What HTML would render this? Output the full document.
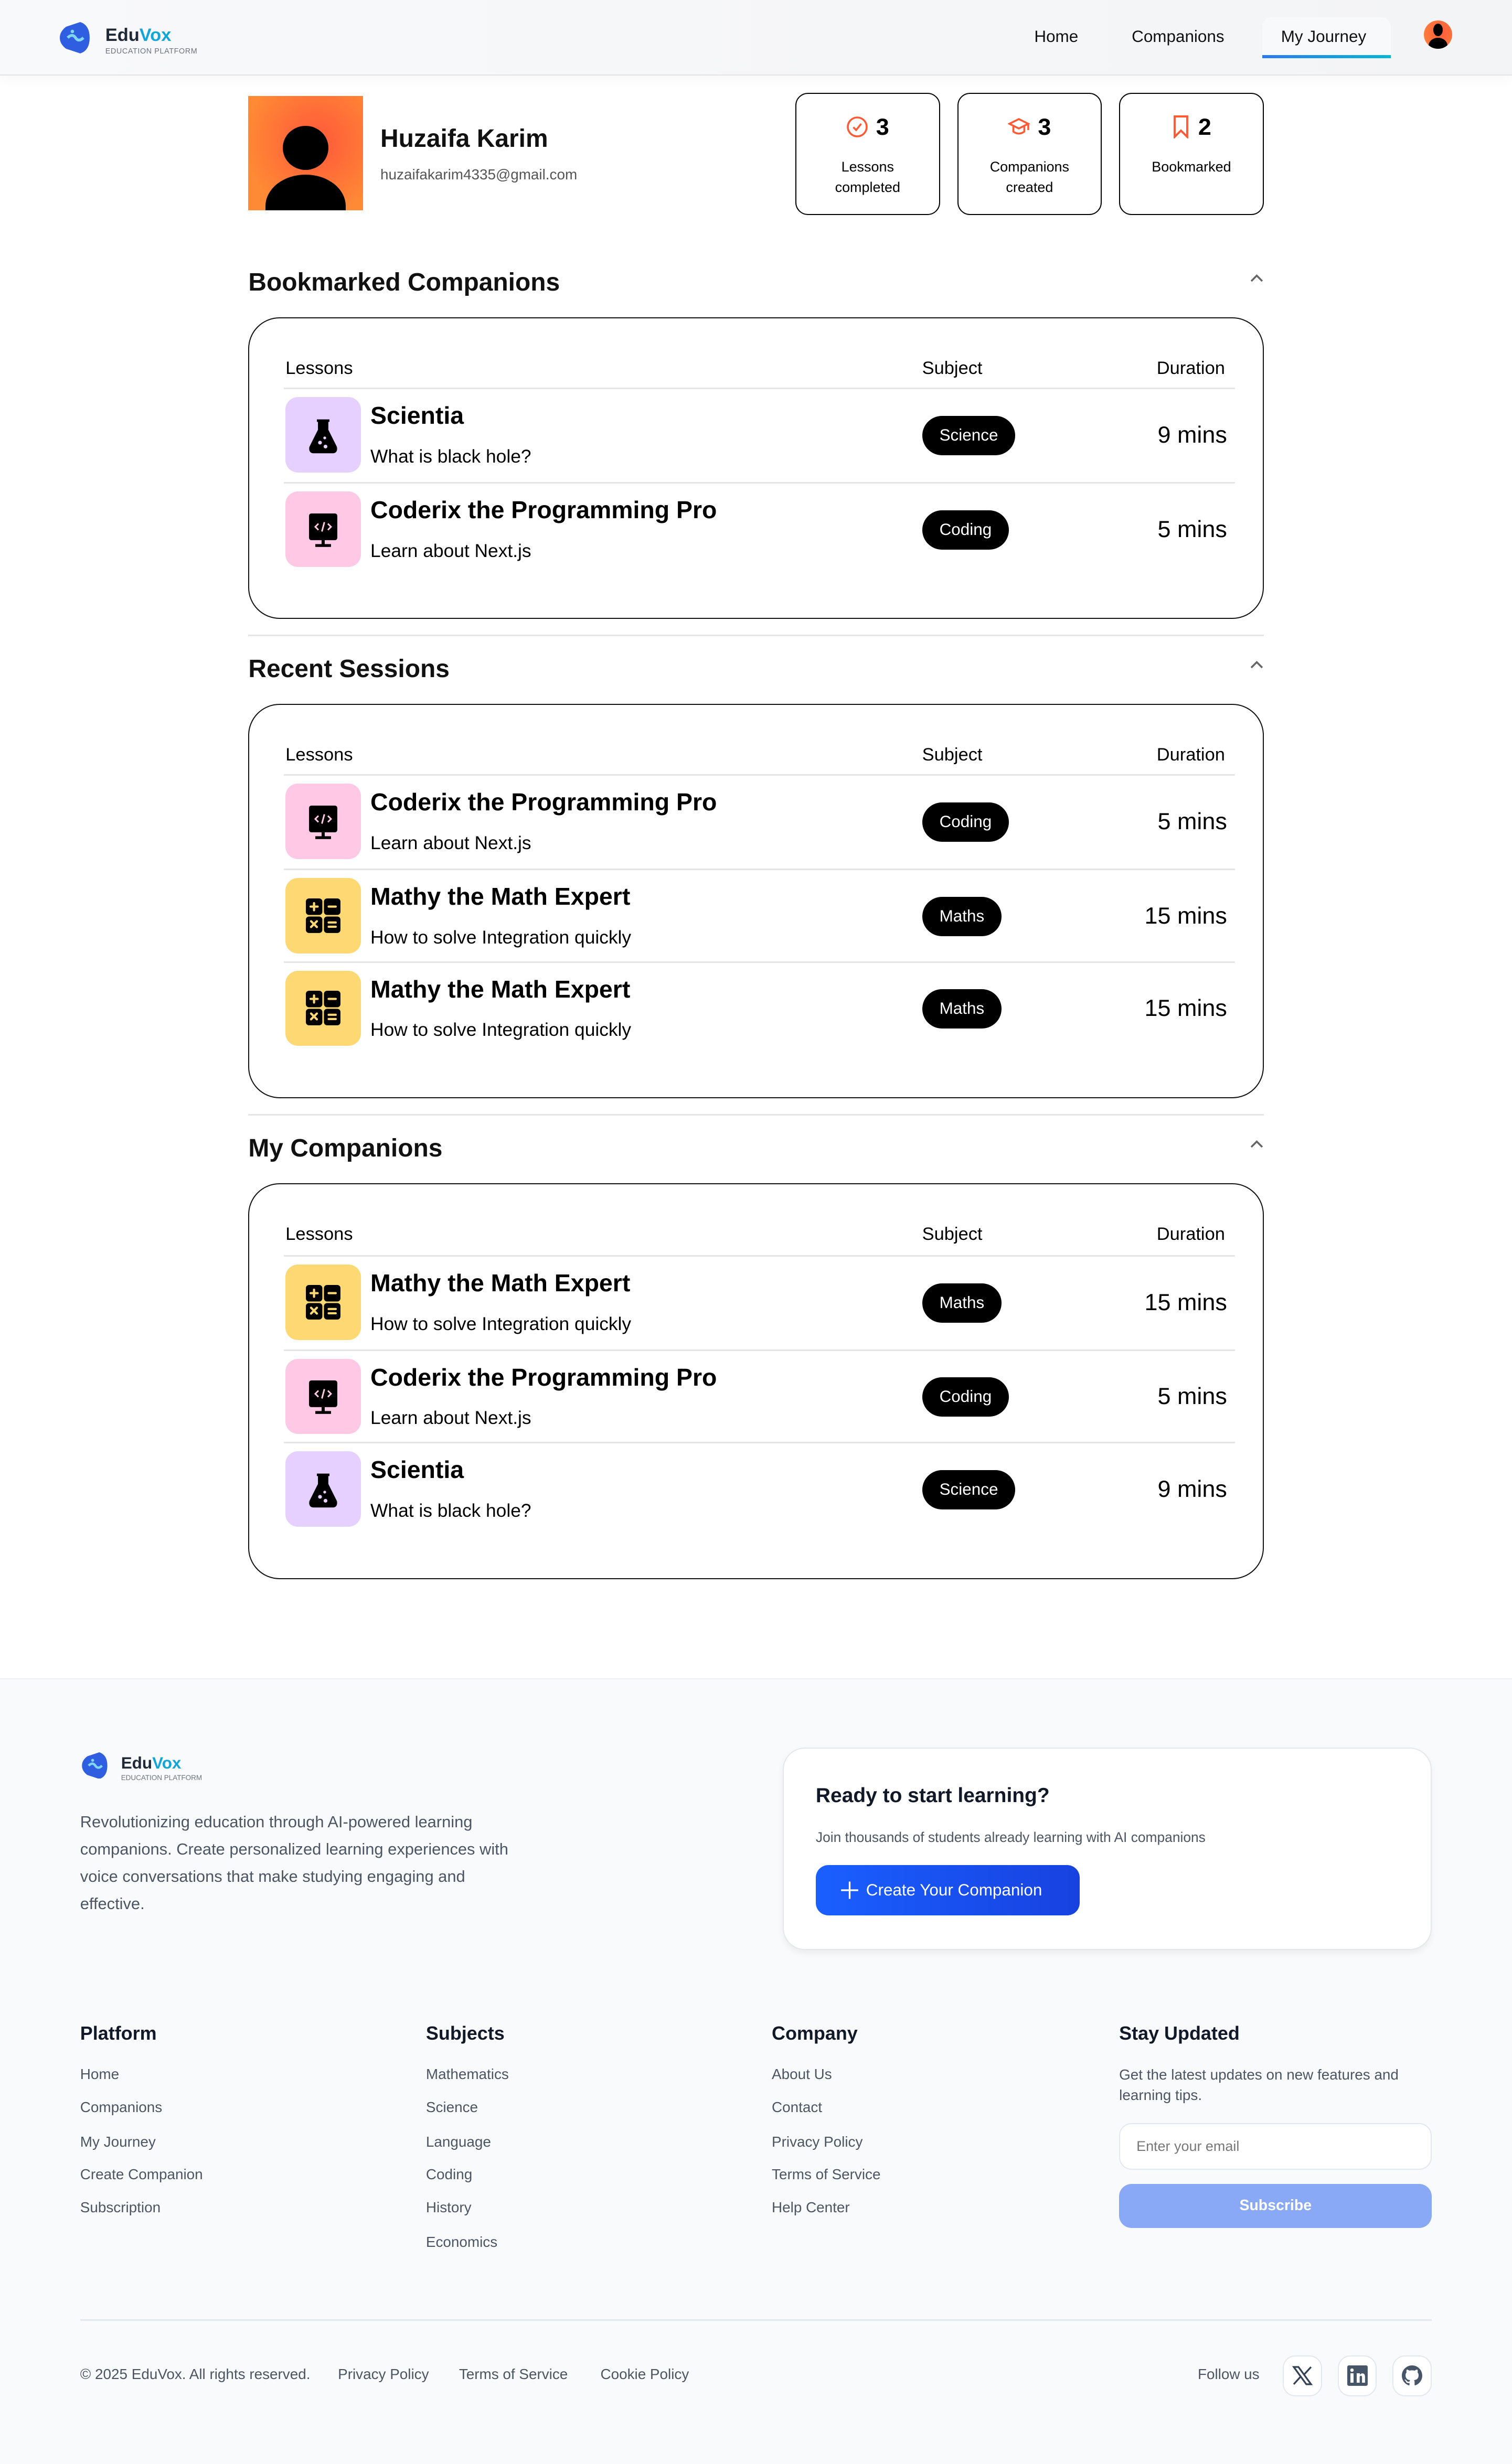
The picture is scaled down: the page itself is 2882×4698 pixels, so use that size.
<!DOCTYPE html>
<html><head><meta charset="utf-8">
<style>
*{margin:0;padding:0;box-sizing:border-box}
html,body{width:2882px;height:4698px;overflow:hidden;background:#fff}
#w{zoom:2.996;width:962px;height:1568px;position:relative;font-family:"Liberation Sans",sans-serif;color:#000;background:#fff}
.a{position:absolute;white-space:nowrap}
.nav{position:absolute;left:0;top:0;width:962px;height:48px;background:linear-gradient(90deg,#f8f9fa,#f3f4f6);border-bottom:1px solid #e3e3e3;box-shadow:0 2px 8px rgba(0,0,0,.04)}
.stat{position:absolute;top:59px;width:92px;height:78px;border:1px solid #000;border-radius:8px;text-align:center}
.stat .n{position:absolute;top:12px;left:0;right:0;font-size:15px;font-weight:bold;line-height:18px;display:flex;justify-content:center;align-items:center;gap:5px}
.stat .l{position:absolute;top:40px;left:0;right:0;font-size:9px;line-height:13px}
.h2{position:absolute;left:158px;font-size:16px;font-weight:bold;line-height:20px;color:#111}
.chev{position:absolute;left:795px;width:9px;height:6px}
.card{position:absolute;left:158px;width:646px;border:1px solid #111;border-radius:20px;background:#fff}
.hd{position:absolute;top:25px;font-size:11.5px;line-height:14px}
.ln{position:absolute;left:22px;width:605px;height:1px;background:#e5e5e5}
.row{position:absolute;left:0;width:646px;height:54px}
.ic{position:absolute;left:23px;top:0;width:48px;height:48px;border-radius:8px;display:flex;align-items:center;justify-content:center}
.tt{position:absolute;left:77px;top:2px;font-size:15.5px;font-weight:bold;line-height:20px}
.st{position:absolute;left:77px;top:31px;font-size:11.8px;line-height:14px}
.pill{position:absolute;left:428px;top:12px;height:25px;border-radius:13px;background:#000;color:#fff;font-size:10.5px;line-height:25px;padding:0 11px}
.du{position:absolute;right:24px;top:15px;font-size:15px;line-height:18px}
.sep{position:absolute;left:158px;width:646px;height:1px;background:#e5e5e5}
.foot{position:absolute;left:0;top:1068px;width:962px;height:500px;background:#f9fafb;border-top:1px solid #eceef1}
.fh{position:absolute;font-size:12px;font-weight:bold;line-height:14px;color:#111827}
.fl{position:absolute;font-size:9.3px;line-height:12px;color:#4b5563}
.soc{position:absolute;top:1499px;width:25px;height:26px;border:1px solid #e2e8f0;border-radius:8px;background:#fff;display:flex;align-items:center;justify-content:center}
</style></head><body><div id="w">

<div class="nav">
  <svg class="a" style="left:38px;top:14px" width="21" height="20" viewBox="0 0 21 20"><path d="M4 3 L13 0 Q19 2 19 10 Q19 18 13 20 L4 17 Q0 14 0 10 Q0 6 4 3Z" fill="#2f5fe0"/><path d="M5 10 Q8 7 10 10 Q12 13 15 10" stroke="#7fd6f5" stroke-width="1.8" fill="none"/><circle cx="8" cy="6" r="1.1" fill="#7fd6f5"/></svg>
  <div class="a" style="left:67px;top:16px;font-size:11.5px;font-weight:bold;line-height:13px;color:#1f2937">Edu<span style="color:#14a5d8">Vox</span></div>
  <div class="a" style="left:67px;top:30px;font-size:4.8px;line-height:6px;color:#6b7280;letter-spacing:.2px">EDUCATION PLATFORM</div>
  <div class="a" style="left:658px;top:17px;font-size:10.5px;line-height:13px;color:#111">Home</div>
  <div class="a" style="left:720px;top:17px;font-size:10.5px;line-height:13px;color:#111">Companions</div>
  <div class="a" style="left:803px;top:11px;width:82px;height:26px;background:#f8f9fb;border-radius:6px 6px 0 0"></div>
  <div class="a" style="left:803px;top:35px;width:82px;height:2px;background:linear-gradient(90deg,#2b7bf0,#06b6d4)"></div>
  <div class="a" style="left:815px;top:17px;font-size:10.5px;line-height:13px;color:#111">My Journey</div>
  <div class="a" style="left:906px;top:13px;width:18px;height:18px;border-radius:50%;background:radial-gradient(circle at 60% 40%,#ff5a3c,#ff8a3c);overflow:hidden">
    <div class="a" style="left:6px;top:2px;width:6px;height:8px;border-radius:50%;background:#000"></div>
    <div class="a" style="left:3px;top:11px;width:12px;height:10px;border-radius:50%;background:#000"></div>
  </div>
</div>

<div class="a" style="left:158px;top:61px;width:73px;height:73px;background:radial-gradient(circle at 60% 40%,#ff5a3a 0%,#ff6b38 30%,#ff8a35 75%);overflow:hidden">
  <div class="a" style="left:22px;top:19px;width:29px;height:28px;border-radius:50%;background:#000"></div>
  <div class="a" style="left:11px;top:50px;width:51px;height:40px;border-radius:50% 50% 0 0;background:#000"></div>
</div>
<div class="a" style="left:242px;top:79px;font-size:16px;font-weight:bold;line-height:19px;color:#111">Huzaifa Karim</div>
<div class="a" style="left:242px;top:105px;font-size:9.3px;line-height:12px;color:#555">huzaifakarim4335@gmail.com</div>

<div class="stat" style="left:506px"><div class="n"><svg width="14" height="14" viewBox="0 0 14 14"><circle cx="7" cy="7" r="6" fill="none" stroke="#ff5a36" stroke-width="1.2"/><path d="M4.5 7.2 L6.3 9 L9.5 5" fill="none" stroke="#ff5a36" stroke-width="1.2"/></svg>3</div><div class="l">Lessons<br>completed</div></div>
<div class="stat" style="left:609px"><div class="n"><svg width="14" height="14" viewBox="0 0 14 14"><path d="M1 5 L7 2 L13 5 L7 8Z" fill="none" stroke="#ff5a36" stroke-width="1.2"/><path d="M3.5 6.5 V10 Q7 12.5 10.5 10 V6.5" fill="none" stroke="#ff5a36" stroke-width="1.2"/><path d="M13 5 V9" stroke="#ff5a36" stroke-width="1.2"/></svg>3</div><div class="l">Companions<br>created</div></div>
<div class="stat" style="left:712px"><div class="n"><svg width="12" height="15" viewBox="0 0 12 15"><path d="M2 1 H10 V14 L6 10 L2 14Z" fill="none" stroke="#ff5a36" stroke-width="1.3"/></svg>2</div><div class="l">Bookmarked</div></div>

<div class="h2" style="top:170px">Bookmarked Companions</div>
<svg class="chev" style="top:174px" viewBox="0 0 9 6"><path d="M1 5 L4.5 1.5 L8 5" stroke="#666" stroke-width="1.2" fill="none"/></svg>

<div class="card" style="top:202px;height:192px">
  <div class="hd" style="left:23px">Lessons</div><div class="hd" style="left:428px">Subject</div><div class="hd" style="right:24px">Duration</div>
  <div class="ln" style="top:44px"></div>
  <div class="row" style="top:50px"><div class="ic" style="background:#e5d0ff"><svg width="24" height="26"><use href="#flask"/></svg></div><div class="tt">Scientia</div><div class="st">What is black hole?</div><div class="pill">Science</div><div class="du">9 mins</div></div>
  <div class="ln" style="top:104px"></div>
  <div class="row" style="top:110px"><div class="ic" style="background:#ffc8e4"><svg width="24" height="26"><use href="#code"/></svg></div><div class="tt">Coderix the Programming Pro</div><div class="st">Learn about Next.js</div><div class="pill">Coding</div><div class="du">5 mins</div></div>
</div>

<div class="sep" style="top:404px"></div>
<div class="h2" style="top:416px">Recent Sessions</div>
<svg class="chev" style="top:420px" viewBox="0 0 9 6"><path d="M1 5 L4.5 1.5 L8 5" stroke="#666" stroke-width="1.2" fill="none"/></svg>

<div class="card" style="top:448px;height:251px">
  <div class="hd" style="left:23px">Lessons</div><div class="hd" style="left:428px">Subject</div><div class="hd" style="right:24px">Duration</div>
  <div class="ln" style="top:44px"></div>
  <div class="row" style="top:50px"><div class="ic" style="background:#ffc8e4"><svg width="24" height="26"><use href="#code"/></svg></div><div class="tt">Coderix the Programming Pro</div><div class="st">Learn about Next.js</div><div class="pill">Coding</div><div class="du">5 mins</div></div>
  <div class="ln" style="top:104px"></div>
  <div class="row" style="top:110px"><div class="ic" style="background:#fed872"><svg width="24" height="24"><use href="#calc"/></svg></div><div class="tt">Mathy the Math Expert</div><div class="st">How to solve Integration quickly</div><div class="pill">Maths</div><div class="du">15 mins</div></div>
  <div class="ln" style="top:163px"></div>
  <div class="row" style="top:169px"><div class="ic" style="background:#fed872"><svg width="24" height="24"><use href="#calc"/></svg></div><div class="tt">Mathy the Math Expert</div><div class="st">How to solve Integration quickly</div><div class="pill">Maths</div><div class="du">15 mins</div></div>
</div>

<div class="sep" style="top:709px"></div>
<div class="h2" style="top:721px">My Companions</div>
<svg class="chev" style="top:725px" viewBox="0 0 9 6"><path d="M1 5 L4.5 1.5 L8 5" stroke="#666" stroke-width="1.2" fill="none"/></svg>

<div class="card" style="top:753px;height:252px">
  <div class="hd" style="left:23px">Lessons</div><div class="hd" style="left:428px">Subject</div><div class="hd" style="right:24px">Duration</div>
  <div class="ln" style="top:45px"></div>
  <div class="row" style="top:51px"><div class="ic" style="background:#fed872"><svg width="24" height="24"><use href="#calc"/></svg></div><div class="tt">Mathy the Math Expert</div><div class="st">How to solve Integration quickly</div><div class="pill">Maths</div><div class="du">15 mins</div></div>
  <div class="ln" style="top:105px"></div>
  <div class="row" style="top:111px"><div class="ic" style="background:#ffc8e4"><svg width="24" height="26"><use href="#code"/></svg></div><div class="tt">Coderix the Programming Pro</div><div class="st">Learn about Next.js</div><div class="pill">Coding</div><div class="du">5 mins</div></div>
  <div class="ln" style="top:164px"></div>
  <div class="row" style="top:170px"><div class="ic" style="background:#e5d0ff"><svg width="24" height="26"><use href="#flask"/></svg></div><div class="tt">Scientia</div><div class="st">What is black hole?</div><div class="pill">Science</div><div class="du">9 mins</div></div>
</div>

<svg width="0" height="0" style="position:absolute">
  <defs>
    <g id="flask"><path d="M8 4 H16 M9.5 4 V10 L4 21 Q3.5 24 6 24 H18 Q20.5 24 20 21 L14.5 10 V4" fill="#000" stroke="#000" stroke-width="1.6"/><circle cx="10" cy="18" r="1.2" fill="#e5d0ff"/><circle cx="13.5" cy="20.5" r="1.2" fill="#e5d0ff"/><circle cx="13" cy="15" r="0.9" fill="#e5d0ff"/></g>
    <g id="code"><rect x="3" y="3" width="18" height="17" rx="1.5" fill="#000"/><rect x="11" y="20" width="2" height="3" fill="#000"/><rect x="7" y="22.5" width="10" height="1.8" fill="#000"/><path d="M9 9.5 L7 11.5 L9 13.5 M15 9.5 L17 11.5 L15 13.5 M12.8 8.5 L11.2 14.5" stroke="#ffc8e4" stroke-width="1" fill="none"/></g>
    <g id="calc"><rect x="1" y="1" width="10.5" height="10.5" rx="2" fill="#000"/><rect x="12.5" y="1" width="10.5" height="10.5" rx="2" fill="#000"/><rect x="1" y="12.5" width="10.5" height="10.5" rx="2" fill="#000"/><rect x="12.5" y="12.5" width="10.5" height="10.5" rx="2" fill="#000"/><path d="M4 6.2 H8.5 M6.2 4 V8.5 M15.5 6.2 H20 M4.3 15.5 L8 19.2 M8 15.5 L4.3 19.2 M15.5 16.3 H20 M15.5 19 H20" stroke="#fed872" stroke-width="1.4" stroke-linecap="round"/></g>
  </defs>
</svg>

<div class="foot"></div>
<svg class="a" style="left:52px;top:1115px" width="18" height="17" viewBox="0 0 21 20"><path d="M4 3 L13 0 Q19 2 19 10 Q19 18 13 20 L4 17 Q0 14 0 10 Q0 6 4 3Z" fill="#2f5fe0"/><path d="M5 10 Q8 7 10 10 Q12 13 15 10" stroke="#7fd6f5" stroke-width="1.8" fill="none"/><circle cx="8" cy="6" r="1.1" fill="#7fd6f5"/></svg>
<div class="a" style="left:77px;top:1116px;font-size:10.5px;font-weight:bold;line-height:12px;color:#1f2937">Edu<span style="color:#14a5d8">Vox</span></div>
<div class="a" style="left:77px;top:1129px;font-size:4.5px;line-height:5px;color:#6b7280">EDUCATION PLATFORM</div>
<div class="a" style="left:51px;top:1151px;font-size:10.3px;line-height:17.3px;color:#4b5563;white-space:normal;width:285px">Revolutionizing education through AI-powered learning companions. Create personalized learning experiences with voice conversations that make studying engaging and effective.</div>

<div class="a" style="left:498px;top:1112px;width:413px;height:129px;background:#fff;border:1px solid #e5e7eb;border-radius:14px;box-shadow:0 2px 4px rgba(0,0,0,.06)"></div>
<div class="a" style="left:519px;top:1135px;font-size:13px;font-weight:bold;line-height:16px;color:#111827">Ready to start learning?</div>
<div class="a" style="left:519px;top:1164px;font-size:8.8px;line-height:11px;color:#4b5563">Join thousands of students already learning with AI companions</div>
<div class="a" style="left:519px;top:1187px;width:168px;height:32px;border-radius:8px;background:linear-gradient(90deg,#1a5fff,#1742e0);color:#fff;font-size:10.5px;line-height:32px;padding-left:32px">Create Your Companion</div>
<svg class="a" style="left:535px;top:1197px" width="11" height="12"><path d="M5.5 0.5 V11.5 M0 6 H11" stroke="#fff" stroke-width="1.1"/></svg>

<div class="fh" style="left:51px;top:1287px">Platform</div>
<div class="fl" style="left:51px;top:1314px">Home</div>
<div class="fl" style="left:51px;top:1335px">Companions</div>
<div class="fl" style="left:51px;top:1357px">My Journey</div>
<div class="fl" style="left:51px;top:1378px">Create Companion</div>
<div class="fl" style="left:51px;top:1399px">Subscription</div>

<div class="fh" style="left:271px;top:1287px">Subjects</div>
<div class="fl" style="left:271px;top:1314px">Mathematics</div>
<div class="fl" style="left:271px;top:1335px">Science</div>
<div class="fl" style="left:271px;top:1357px">Language</div>
<div class="fl" style="left:271px;top:1378px">Coding</div>
<div class="fl" style="left:271px;top:1399px">History</div>
<div class="fl" style="left:271px;top:1421px">Economics</div>

<div class="fh" style="left:491px;top:1287px">Company</div>
<div class="fl" style="left:491px;top:1314px">About Us</div>
<div class="fl" style="left:491px;top:1335px">Contact</div>
<div class="fl" style="left:491px;top:1357px">Privacy Policy</div>
<div class="fl" style="left:491px;top:1378px">Terms of Service</div>
<div class="fl" style="left:491px;top:1399px">Help Center</div>

<div class="fh" style="left:712px;top:1287px">Stay Updated</div>
<div class="fl" style="left:712px;top:1314px;line-height:13px;white-space:normal;width:200px">Get the latest updates on new features and learning tips.</div>
<div class="a" style="left:712px;top:1351px;width:199px;height:30px;border:1px solid #e2e8f0;border-radius:8px;background:#fff"></div>
<div class="a" style="left:723px;top:1360px;font-size:9px;line-height:12px;color:#777">Enter your email</div>
<div class="a" style="left:712px;top:1390px;width:199px;height:28px;border-radius:8px;background:#89a8f6;color:#fff;font-size:9.5px;font-weight:bold;line-height:28px;text-align:center">Subscribe</div>

<div class="a" style="left:51px;top:1476px;width:860px;height:1px;background:#e2e8f0"></div>
<div class="fl" style="left:51px;top:1505px">© 2025 EduVox. All rights reserved.</div>
<div class="fl" style="left:215px;top:1505px">Privacy Policy</div>
<div class="fl" style="left:292px;top:1505px">Terms of Service</div>
<div class="fl" style="left:382px;top:1505px">Cookie Policy</div>
<div class="fl" style="left:762px;top:1505px">Follow us</div>
<div class="soc" style="left:816px"><svg width="13" height="13" viewBox="0 0 13 13"><path d="M1 1 L9 12 H12 L4 1Z M12 1 L7.6 5.8 M1 12 L5.5 7" fill="none" stroke="#334155" stroke-width="1.1"/></svg></div>
<div class="soc" style="left:851px"><svg width="13" height="13" viewBox="0 0 13 13"><rect x="0" y="0" width="13" height="13" rx="1" fill="#475569"/><rect x="2" y="5" width="2" height="6" fill="#fff"/><circle cx="3" cy="3" r="1.1" fill="#fff"/><path d="M6 11 V5 H8 V6 Q9 4.8 10.3 5.2 Q11.3 5.6 11.3 7.3 V11 H9.4 V7.6 Q9.4 6.6 8.6 6.6 Q7.9 6.6 7.9 7.6 V11Z" fill="#fff"/></svg></div>
<div class="soc" style="left:886px"><svg width="13" height="13" viewBox="0 0 16 16"><path fill="#475569" d="M8 0C3.58 0 0 3.58 0 8c0 3.54 2.29 6.53 5.47 7.59.4.07.55-.17.55-.38 0-.19-.01-.82-.01-1.49-2.01.37-2.53-.49-2.69-.94-.09-.23-.48-.94-.82-1.13-.28-.15-.68-.52-.01-.53.63-.01 1.08.58 1.23.82.72 1.21 1.87.87 2.33.66.07-.52.28-.87.51-1.07-1.78-.2-3.64-.89-3.64-3.95 0-.87.31-1.59.82-2.15-.08-.2-.36-1.02.08-2.12 0 0 .67-.21 2.2.82.64-.18 1.32-.27 2-.27s1.36.09 2 .27c1.53-1.04 2.2-.82 2.2-.82.44 1.1.16 1.92.08 2.12.51.56.82 1.27.82 2.15 0 3.07-1.87 3.75-3.65 3.95.29.25.54.73.54 1.48 0 1.07-.01 1.93-.01 2.2 0 .21.15.46.55.38A8.01 8.01 0 0016 8c0-4.42-3.58-8-8-8z"/></svg></div>

</div></body></html>
